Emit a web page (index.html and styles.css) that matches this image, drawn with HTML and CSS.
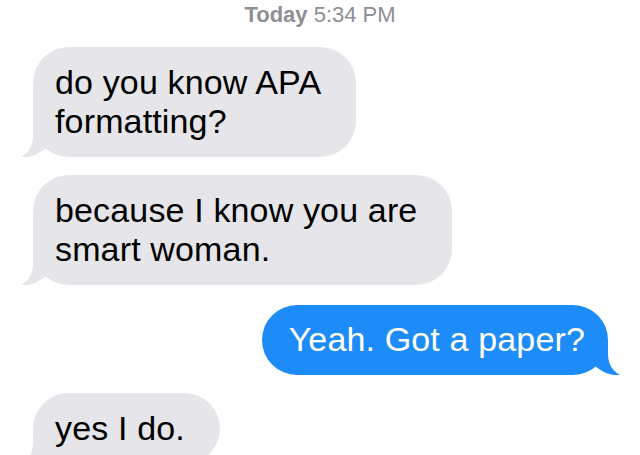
FILE: index.html
```html
<!DOCTYPE html>
<html>
<head>
<meta charset="utf-8">
<link rel="stylesheet" href="styles.css">
</head>
<body>
<div class="thread">
  <div class="stamp"><b>Today</b> 5:34 PM</div>
  <div class="bubble in">do you know APA<br>formatting?<svg class="tail" width="34" height="36" viewBox="0 0 34 36"><path d="M12 0 L12 14 C12 26 7 32 0 36 C8 37 16 34 24 28 L30 20 Z"/></svg></div>
  <div class="bubble in">because I know you are<br>smart woman.<svg class="tail" width="34" height="36" viewBox="0 0 34 36"><path d="M12 0 L12 14 C12 26 7 32 0 36 C8 37 16 34 24 28 L30 20 Z"/></svg></div>
  <div class="bubble out">Yeah. Got a paper?<svg class="tail" width="34" height="36" viewBox="0 0 34 36"><path d="M12 0 L12 14 C12 26 7 32 0 36 C8 37 16 34 24 28 L30 20 Z"/></svg></div>
  <div class="bubble in">yes I do.<svg class="tail" width="34" height="36" viewBox="0 0 34 36"><path d="M12 0 L12 14 C12 26 7 32 0 36 C8 37 16 34 24 28 L30 20 Z"/></svg></div>
</div>
</body>
</html>
```
FILE: styles.css
```css
html, body {
  margin: 0;
  padding: 0;
  background: #ffffff;
  overflow: hidden;
}
body {
  width: 640px;
  height: 455px;
  font-family: "Liberation Sans", Arial, sans-serif;
}
.thread {
  display: flex;
  flex-direction: column;
  gap: 18px;
  padding-top: 2px;
}
.stamp {
  align-self: center;
  font-size: 22px;
  line-height: 25px;
  color: #8e8e93;
  margin-bottom: 2px;
}
.stamp b {
  font-weight: bold;
}
.bubble {
  position: relative;
  width: max-content;
  font-size: 34px;
  line-height: 39px;
  letter-spacing: 0.15px;
  padding: 16px 35px 16px 22px;
  border-radius: 36px;
}
.bubble.in {
  align-self: flex-start;
  margin-left: 33px;
  background: #e5e5ea;
  color: #000;
}
.bubble.out {
  align-self: flex-end;
  margin-right: 32px;
  padding: 15px 23px 16px 27px;
  background: #1d8cf8;
  color: #fff;
  margin-top: 2px;
}
.tail {
  position: absolute;
  bottom: 0;
  display: block;
}
.in .tail {
  left: -12px;
  fill: #e5e5ea;
}
.out .tail {
  right: -12px;
  fill: #1d8cf8;
  transform: scaleX(-1);
}
```
